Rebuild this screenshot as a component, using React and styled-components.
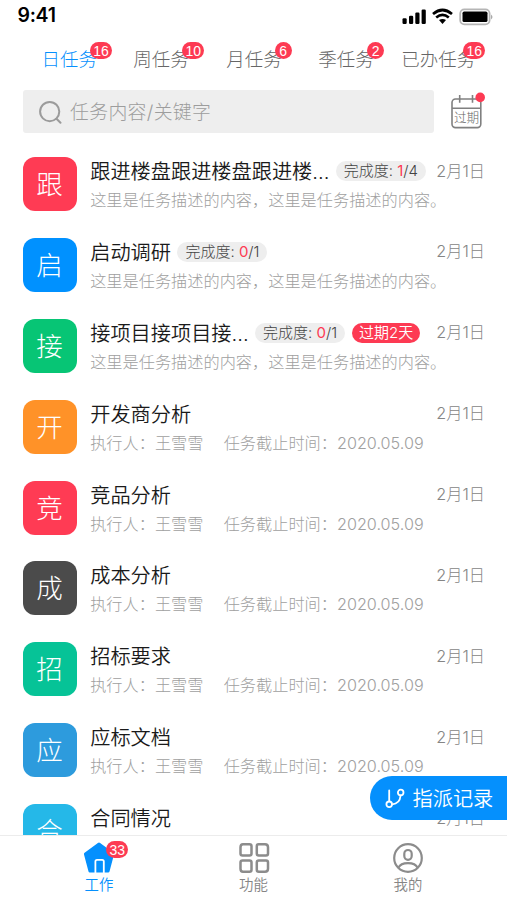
import React from 'react';
import styled, { createGlobalStyle, css } from 'styled-components';

const RED = '#fd3a53';
const BLUE = '#0590fd';

const GlobalStyle = createGlobalStyle`
  * { box-sizing: border-box; }
  body {
    margin: 0;
    background: #fff;
    font-family: Inter, 'Noto Sans CJK SC', sans-serif;
    font-weight: 300;
  }
`;

const Screen = styled.div`
  position: relative;
  display: flex;
  flex-direction: column;
  width: 507px;
  height: 900px;
  overflow: hidden;
  background: #fff;
`;

const StatusBar = styled.header`
  display: flex;
  align-items: center;
  justify-content: space-between;
  height: 32px;
  padding: 0 14px 2px 17.5px;
  flex: none;
`;

const Clock = styled.span`
  font-size: 19.5px;
  font-weight: 600;
  line-height: 28px;
  letter-spacing: -0.3px;
  color: #000;
`;

const StatusIcons = styled.svg`
  width: 92px;
  height: 20px;
  margin-top: 2px;
`;

const Tabs = styled.nav`
  display: flex;
  height: 58px;
  padding: 13px 0 0 41.5px;
  flex: none;
`;

const Tab = styled.a`
  position: relative;
  flex: none;
  margin-right: ${(p) => p.$gap}px;
  font-size: 18.5px;
  line-height: 28px;
  height: 28px;
  color: ${(p) => (p.$active ? BLUE : '#666')};
`;

const Badge = styled.span`
  position: absolute;
  top: ${(p) => p.$top}px;
  left: ${(p) => p.$left}px;
  min-width: 17px;
  height: 17px;
  padding: 0 3.3px;
  border-radius: 9px;
  background: ${RED};
  color: #fff;
  font-family: 'Liberation Sans', sans-serif;
  font-weight: 400;
  font-size: 14px;
  line-height: 18px;
  text-align: center;
`;

const SearchRow = styled.div`
  display: flex;
  height: 43px;
  padding: 0 20px 0 22.5px;
  flex: none;
`;

const SearchBox = styled.div`
  display: flex;
  align-items: center;
  width: 411.5px;
  padding-left: 16px;
  border-radius: 3px;
  background: #eee;
  color: #9d9d9d;
  font-size: 18.9px;
  line-height: 28px;
  letter-spacing: 0.3px;

  svg { width: 23px; height: 24px; margin-right: 8.5px; }
`;

const SearchHint = styled.span`
  padding-top: 2px;
`;

const CalendarIcon = styled.svg`
  width: 38px;
  height: 40px;
  margin: 2px 0 0 14px;

  text {
    font-size: 12.6px;
    fill: #666;
  }
`;

const TaskList = styled.main`
  flex: 1;
  min-height: 0;
  overflow: hidden;
  padding: 24px 22px 0 22.5px;
`;

const TaskRow = styled.article`
  display: flex;
  height: 80.9px;
`;

const Tile = styled.div`
  flex: none;
  width: 54px;
  height: 54px;
  margin-right: 13.7px;
  border-radius: 12px;
  background: ${(p) => p.$color};
  color: #fff;
  font-size: 26.5px;
  line-height: 55px;
  text-align: center;
`;

const TaskBody = styled.div`
  flex: 1;
  min-width: 0;
`;

const TitleLine = styled.div`
  display: flex;
  align-items: center;
  height: 28px;
`;

const Title = styled.h2`
  margin: 0 6.5px 0 0;
  padding-top: 2px;
  font-size: 20.2px;
  font-weight: 350;
  line-height: 28px;
  white-space: nowrap;
  color: #1a1a1a;
`;

const pill = css`
  flex: none;
  height: 20px;
  margin-right: 7px;
  border-radius: 10px;
  font-size: 15px;
  line-height: 20px;
  text-align: center;
  white-space: nowrap;
`;

const Progress = styled.span`
  ${pill}
  width: 90px;
  background: #eee;
  color: #444;
`;

const Done = styled.b`
  font-weight: 400;
  color: ${RED};
`;

const Overdue = styled.span`
  ${pill}
  width: 68px;
  background: ${RED};
  color: #fff;
  font-weight: 350;
`;

const DateText = styled.time`
  margin-left: auto;
  font-size: 16.2px;
  line-height: 20px;
  padding-bottom: 1px;
  white-space: nowrap;
  color: #858585;
`;

const Description = styled.p`
  display: flex;
  margin: 3px 0 0;
  font-size: 16.2px;
  line-height: 24px;
  white-space: nowrap;
  color: #a0a0a0;
`;

const Assignee = styled.span`
  width: 133.5px;
`;

const RecordsButton = styled.button`
  position: absolute;
  right: 0;
  top: 776px;
  display: flex;
  align-items: center;
  width: 137px;
  height: 43.5px;
  padding: 0 0 0 14.5px;
  border: 0;
  border-radius: 22px 0 0 22px;
  background: ${BLUE};
  color: #fff;
  font-family: inherit;
  font-size: 20.2px;
  font-weight: 350;

  svg { width: 21px; height: 22px; margin-right: 7px; }
`;

const BottomNav = styled.nav`
  display: grid;
  grid-template-columns: repeat(3, 154.5px);
  justify-content: center;
  height: 65.5px;
  flex: none;
  border-top: 1px solid #ececec;
  background: #fff;
`;

const NavItem = styled.a`
  position: relative;
  display: flex;
  flex-direction: column;
  align-items: center;
  padding-top: 6px;
  font-size: 14.4px;
  line-height: 20px;
  font-weight: 350;
  color: ${(p) => (p.$active ? BLUE : '#858585')};

  svg { width: 32px; height: 32px; margin-bottom: 1px; }
`;

const tabs = [
  { label: '日任务', count: 16, gap: 36.2, left: 48.5, active: true },
  { label: '周任务', count: 10, gap: 37.5, left: 49 },
  { label: '月任务', count: 6, gap: 36.5, left: 48.5 },
  { label: '季任务', count: 2, gap: 27.5, left: 49 },
  { label: '已办任务', count: 16, gap: 0, left: 62 },
];

const TEXT = '这里是任务描述的内容，这里是任务描述的内容。';

const tasks = [
  { mark: '跟', color: '#ff3b54', title: '跟进楼盘跟进楼盘跟进楼...', done: 1, total: 4, text: TEXT },
  { mark: '启', color: '#0091ff', title: '启动调研', done: 0, total: 1, text: TEXT },
  { mark: '接', color: '#07c575', title: '接项目接项目接...', done: 0, total: 1, overdue: '过期2天', text: TEXT },
  { mark: '开', color: '#ff9228', title: '开发商分析' },
  { mark: '竞', color: '#ff3b54', title: '竞品分析' },
  { mark: '成', color: '#4b4b4b', title: '成本分析' },
  { mark: '招', color: '#06c397', title: '招标要求' },
  { mark: '应', color: '#2d9bdd', title: '应标文档' },
  { mark: '合', color: '#25b8e8', title: '合同情况' },
];

function Task({ mark, color, title, done, total, overdue, text }) {
  return (
    <TaskRow>
      <Tile $color={color}>{mark}</Tile>
      <TaskBody>
        <TitleLine>
          <Title>{title}</Title>
          {total && (
            <Progress>
              完成度: <Done>{done}</Done>/{total}
            </Progress>
          )}
          {overdue && <Overdue>{overdue}</Overdue>}
          <DateText>2月1日</DateText>
        </TitleLine>
        <Description>
          {text || (
            <>
              <Assignee>执行人：王雪雪</Assignee>
              <span>任务截止时间：2020.05.09</span>
            </>
          )}
        </Description>
      </TaskBody>
    </TaskRow>
  );
}

export default function App() {
  return (
    <Screen>
      <GlobalStyle />
      <StatusBar>
        <Clock>9:41</Clock>
        <StatusIcons viewBox="0 0 92 20">
          <g fill="#000">
            <rect x="1.5" y="12.3" width="4.2" height="5.7" rx="1.2" />
            <rect x="8" y="9.8" width="4.2" height="8.2" rx="1.2" />
            <rect x="14.3" y="6.6" width="4.2" height="11.4" rx="1.2" />
            <rect x="20.6" y="3.5" width="4.2" height="14.5" rx="1.2" />
            <rect x="61.5" y="5.6" width="25" height="10.5" rx="1.6" />
            <path d="M38 14.1q3.6-2.2 7 0L41.5 18z" />
          </g>
          <g fill="none" stroke="#000" strokeWidth="2.7">
            <path d="M32 8q9.5-8 19 0" />
            <path d="M35.2 11.5q6.3-5.1 12.6 0" />
          </g>
          <rect x="59.2" y="3.4" width="29.4" height="15" rx="4.2" fill="none" stroke="#b5b5b5" strokeWidth="1.8" />
          <path d="M90 8.4q3 2.5 0 5z" fill="#aaa" />
        </StatusIcons>
      </StatusBar>

      <Tabs>
        {tabs.map((t) => (
          <Tab key={t.label} $gap={t.gap} $active={t.active}>
            {t.label}
            <Badge $top={-3} $left={t.left}>{t.count}</Badge>
          </Tab>
        ))}
      </Tabs>

      <SearchRow>
        <SearchBox>
          <svg viewBox="0 0 23 24" fill="none" stroke="#9b9b9b" strokeWidth="2">
            <circle cx="10.7" cy="11.6" r="9.6" />
            <path d="M17.5 18.7l4 4.1" strokeLinecap="round" />
          </svg>
          <SearchHint>任务内容/关键字</SearchHint>
        </SearchBox>
        <CalendarIcon viewBox="0 0 38 40">
          <g fill="none" stroke="#808080" strokeWidth="1.6">
            <rect x="4" y="7" width="28.8" height="28.6" rx="3.5" />
            <path d="M4 16.2h28.8M11.7 3v7.8M24.5 3v7.8" />
          </g>
          <text x="18.6" y="30.4" textAnchor="middle">过期</text>
          <circle cx="32.2" cy="5.4" r="4.8" fill={RED} />
        </CalendarIcon>
      </SearchRow>

      <TaskList>
        {tasks.map((t) => (
          <Task key={t.mark} {...t} />
        ))}
      </TaskList>

      <RecordsButton>
        <svg viewBox="0 0 21 22" fill="none" stroke="#fff" strokeWidth="1.8" strokeLinecap="round">
          <circle cx="4.2" cy="17.3" r="2.8" />
          <circle cx="15.7" cy="5.5" r="2.8" />
          <path d="M4.2 14.3V3.5M7.2 17.3q7.6-.4 8.4-8.8" />
        </svg>
        指派记录
      </RecordsButton>

      <BottomNav>
        <NavItem $active>
          <svg viewBox="0 0 32 32">
            <path d="M14.9 1q1.1-.8 2.2 0L30.4 10.800q.9.7.6 1.8L26.5 29.6q-.3 1-1.300 1H6.8q-1 0-1.300-1L1 12.600q-.3-1.100.6-1.800z" fill={BLUE} />
            <path d="M12.400 31v-11.500q0-1.600 1.600-1.600h5.200q1.600 0 1.600 1.600V31" fill="none" stroke="#fff" strokeWidth="1.8" />
          </svg>
          工作
          <Badge $top={5} $left={84.5}>33</Badge>
        </NavItem>
        <NavItem>
          <svg viewBox="0 0 32 32" fill="none" stroke="#8c8c8c" strokeWidth="2.5">
            <path d="M5 2.200h6.500q2 0 2 2v7.200q0 2-2 2h-7q-2 0-2-2v-6.200q0-3 2.500-3z" />
            <path d="M20.500 2.200h6.500q3 0 3 3v6.200q0 2-2 2h-7.200q-2 0-2-2v-7.200q0-2 1.700-2z" />
            <path d="M4.500 18.500h7q2 0 2 2v7.200q0 2-2 2h-6.500q-2.500 0-2.500-3v-6.200q0-2 2-2z" />
            <path d="M20.800 18.500h7.200q2 0 2 2v6.200q0 3-3 3h-6.200q-2 0-2-2v-7.200q0-2 2-2z" />
          </svg>
          功能
        </NavItem>
        <NavItem>
          <svg viewBox="0 0 32 32" fill="none" stroke="#8c8c8c" strokeWidth="2.2">
            <circle cx="16" cy="16" r="13.8" />
            <rect x="12.300" y="8" width="7.400" height="9.800" rx="3.700" />
            <path d="M6.500 25.600q2-4.500 9.500-4.500t9.500 4.500" />
          </svg>
          我的
        </NavItem>
      </BottomNav>
    </Screen>
  );
}
